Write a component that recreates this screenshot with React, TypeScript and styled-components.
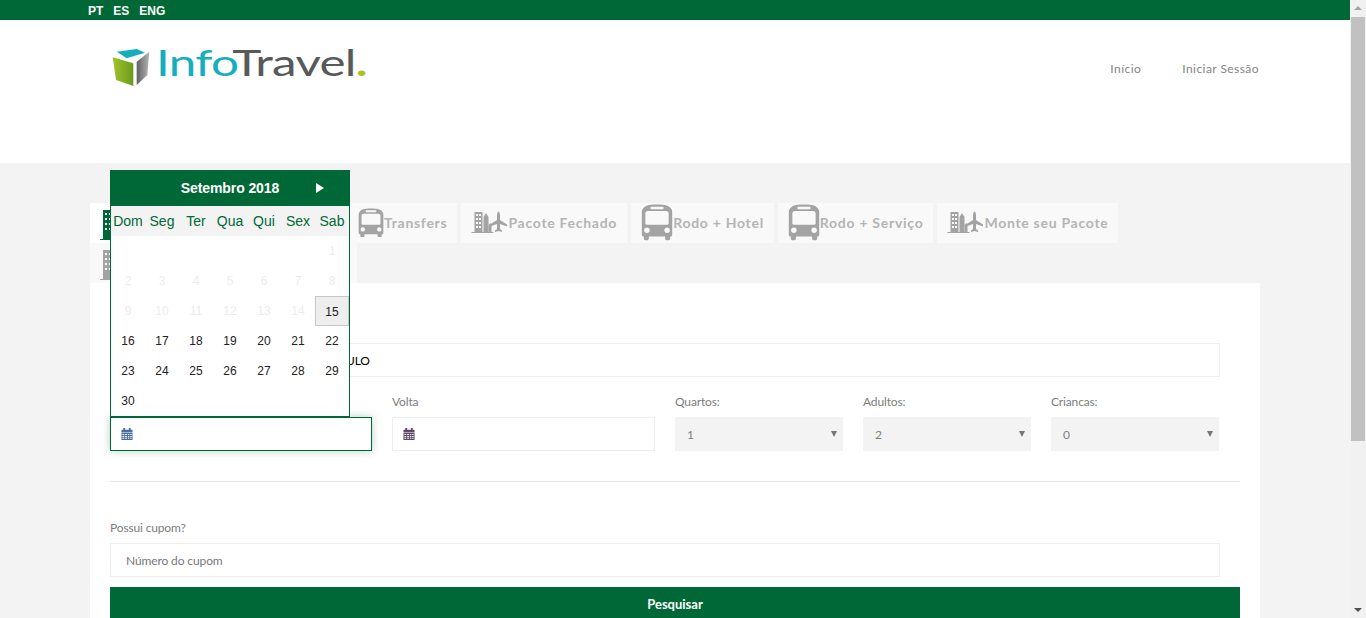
import React, { FC } from "react"
import styled, { createGlobalStyle } from "styled-components"

const GREEN = "#006837"

const GlobalStyle = createGlobalStyle`
    html, body {
        margin: 0;
        padding: 0;
        height: 618px;
        overflow: hidden;
        background: #f3f3f3;
        font-family: 'Lato', sans-serif;
    }
    * { box-sizing: border-box; }
`

const BusIcon: FC<{ size: number; className?: string }> = ({ size, className }) => (
    <svg className={className} width={size} height={size * 1.14} viewBox="0 0 31 36" fill="#a3a3a3">
        <path d="M6 1.500C9 .2 22 .2 25 1.500c3 1.200 5.500 3 5.500 6.500V30c0 1.400-.7 2-2 2v2c0 2.500-5 2.500-5 0v-2H7.500v2c0 2.500-5 2.500-5 0v-2c-1.300 0-2-.6-2-2V8c0-3.500 2.500-5.300 5.500-6.500Z" />
        <rect x="9" y="2.800" width="13" height="2.400" rx="1" fill="#f9f9f9" />
        <path d="M4 9.500C4 8 5 7 6.500 7h18C26 7 27 8 27 9.500V19c0 1-1 1.500-2 1.500H6c-1 0-2-.5-2-1.500Z" fill="#f9f9f9" />
        <circle cx="5.500" cy="26" r="2.700" fill="#f9f9f9" />
        <circle cx="25.500" cy="26" r="2.700" fill="#f9f9f9" />
    </svg>
)

const CityPlaneIcon: FC = () => (
    <svg width="37" height="23" viewBox="0 0 36 23" fill="#a3a3a3">
        <rect x="3" y="1" width="8" height="20" />
        <path d="M4.500 3h2v2h-2zM7.500 3h2v2h-2zM4.500 7h2v2h-2zM7.500 7h2v2h-2zM4.500 11h2v2h-2zM7.500 11h2v2h-2zM4.500 15h2v2h-2zM7.500 15h2v2h-2z" fill="#f9f9f9" />
        <path d="M12 21V6l2.500-4L17 6v15Z" />
        <path d="M17 21v-7l2-2 1 2v7Z" />
        <rect x="0" y="21" width="22" height="1" />
        <path d="M27 0c1 0 1.500 2 1.500 5v3.500l7 4.500v2l-7-2.500v5l2 1.500v1.500L27 19.500 23.500 20.500V19l2-1.500v-5l-7 2.500v-2l7-4.500V5c0-3 .5-5 1.500-5Z" transform="translate(0 0.500)" />
    </svg>
)

const HotelIcon: FC<{ color: string }> = ({ color }) => (
    <HotelGlyph width="30" height="30" viewBox="0 0 30 30" fill={color}>
        <rect x="3" y="0" width="18" height="29" />
        <path d="M5 3h2v2H5zM9 3h2v2H9zM13 3h2v2h-2zM17 3h2v2h-2zM5 8h2v2H5zM9 8h2v2H9zM13 8h2v2h-2zM17 8h2v2h-2zM5 13h2v2H5zM9 13h2v2H9zM13 13h2v2h-2zM17 13h2v2h-2zM5 18h2v2H5zM9 18h2v2H9zM13 18h2v2h-2zM17 18h2v2h-2z" fill="#f9f9f9" />
        <rect x="0" y="29" width="26" height="1" />
    </HotelGlyph>
)

const CalendarIcon: FC<{ color: string }> = ({ color }) => (
    <svg width="12" height="12" viewBox="0 0 12 13" fill={color}>
        <path d="M0 2h2V0h2v2h4V0h2v2h2v3H0Z" />
        <path d="M0 5.500h12V13H0Zm1 1v1.200h2V6.500Zm3 0v1.200h2V6.500Zm3 0v1.200h1.500V6.500Zm2.500 0v1.200H11V6.500ZM1 8.700v1.300h2V8.700Zm3 0v1.300h2V8.700Zm3 0v1.300h1.500V8.700Zm2.500 0v1.300H11V8.700ZM1 11v1h2v-1Zm3 0v1h2v-1Zm3 0v1h1.500v-1Zm2.500 0v1H11v-1Z" fillRule="evenodd" />
    </svg>
)

const CubeLogo: FC = () => (
    <svg width="38" height="38" viewBox="0 0 38 38">
        <defs>
            <linearGradient id="cubeGreen" x1="0" x2="1" y1="0" y2="0">
                <stop offset="0" stopColor="#a2c42c" />
                <stop offset="1" stopColor="#6b9a1c" />
            </linearGradient>
            <linearGradient id="cubeGray" x1="0" x2="1" y1="0" y2="0">
                <stop offset="0" stopColor="#5e6062" />
                <stop offset="1" stopColor="#b4b5b7" />
            </linearGradient>
        </defs>
        <path d="M4.700 2.700 24.700 0 33 3.700 14.700 9.300Z" fill="#14aebf" />
        <path d="M.7 8.300 21.300 14.300V37L4 31Z" fill="url(#cubeGreen)" />
        <path d="M24.700 12.700 37.300 2.700 35.300 26 24.700 36Z" fill="url(#cubeGray)" />
    </svg>
)

const weekDays = ["Dom", "Seg", "Ter", "Qua", "Qui", "Sex", "Sab"]

const DatePopup: FC = () => {
    const cells: (number | null)[] = [null, null, null, null, null, null]
    for (let d = 1; d <= 30; d++) cells.push(d)

    return (
        <Popup>
            <PopupHeader>
                <PopupTitle>Setembro 2018</PopupTitle>
                <NextArrow />
            </PopupHeader>
            <WeekRow>
                {weekDays.map(d => <WeekDay key={d}>{d}</WeekDay>)}
            </WeekRow>
            <DayGrid>
                {cells.map((d, c) => (
                    <Day key={c} $past={d !== null && d < 15} $today={d === 15}>{d}</Day>
                ))}
            </DayGrid>
        </Popup>
    )
}

const Choice: FC<{ label: string; value: string }> = ({ label, value }) => (
    <Field $width={168}>
        <Label>{label}</Label>
        <SelectBox>
            <Select defaultValue={value}>
                <option>{value}</option>
            </Select>
        </SelectBox>
    </Field>
)

export default function App() {
    return (
        <Page>
            <GlobalStyle />
            <Main>
                <TopBar>
                    <Lang>PT</Lang>
                    <Lang>ES</Lang>
                    <Lang>ENG</Lang>
                </TopBar>
                <Header>
                    <Logo>
                        <CubeLogo />
                        <LogoText>
                            <LogoInfo>Info</LogoInfo>Travel<LogoDot>.</LogoDot>
                        </LogoText>
                    </Logo>
                    <Menu>
                        <MenuItem>Início</MenuItem>
                        <MenuItem>Iniciar Sessão</MenuItem>
                    </Menu>
                </Header>
                <Content>
                    <Tabs>
                        <Tab $active $width={128}><HotelIcon color={GREEN} /></Tab>
                        <Tab $width={122} />
                        <Tab><BusIcon size={26} />Transfers</Tab>
                        <Tab><CityPlaneIcon />Pacote Fechado</Tab>
                        <Tab><BusIcon size={32} />Rodo + Hotel</Tab>
                        <Tab><BusIcon size={32} />Rodo + Serviço</Tab>
                        <Tab><CityPlaneIcon />Monte seu Pacote</Tab>
                        <Tab $width={267}><HotelIcon color="#a3a3a3" /></Tab>
                    </Tabs>
                    <Panel>
                        <Input $width={1110} defaultValue="HOTEIS EM SAO PAULO, SP - EM SAO PAULO" />
                        <Row>
                            <Field $width={262}>
                                <Label />
                                <DateBox>
                                    <DateIcon><CalendarIcon color="#4a6f9e" /></DateIcon>
                                    <DateInput $focused />
                                    <DatePopup />
                                </DateBox>
                            </Field>
                            <Field $width={263}>
                                <Label>Volta</Label>
                                <DateBox>
                                    <DateIcon><CalendarIcon color="#5c4a63" /></DateIcon>
                                    <DateInput />
                                </DateBox>
                            </Field>
                            <Choice label="Quartos:" value="1" />
                            <Choice label="Adultos:" value="2" />
                            <Choice label="Criancas:" value="0" />
                        </Row>
                        <Rule />
                        <Label>Possui cupom?</Label>
                        <Input $width={1110} placeholder="Número do cupom" />
                        <SearchButton>Pesquisar</SearchButton>
                    </Panel>
                </Content>
            </Main>
            <ScrollBar>
                <ScrollUp />
                <ScrollThumb />
                <ScrollDown />
            </ScrollBar>
        </Page>
    )
}

const Page = styled.div`
    display: flex;
    width: 1366px;
    height: 618px;
    overflow: hidden;
`

const Main = styled.div`
    width: 1350px;
    flex: none;
`

const TopBar = styled.div`
    display: flex;
    gap: 10px;
    height: 20px;
    padding: 2px 0 0 88px;
    align-items: center;
    background: ${GREEN};
`

const Lang = styled.a`
    font-family: 'Liberation Sans', Arial, sans-serif;
    font-size: 12px;
    font-weight: 700;
    color: #fff;
`

const Header = styled.header`
    display: flex;
    justify-content: space-between;
    height: 143px;
    padding: 29px 91px 0 112px;
    background: #fff;
`

const Logo = styled.div`
    display: flex;
    align-items: flex-start;
    gap: 6px;
    height: 40px;
`

const LogoText = styled.div`
    font-family: 'Lato', sans-serif;
    font-size: 36px;
    font-weight: 400;
    line-height: 26px;
    letter-spacing: -0.5px;
    color: #58595b;
    transform: scaleX(1.37);
    transform-origin: left top;
`

const LogoInfo = styled.span`
    color: #14aebf;
`

const LogoDot = styled.span`
    color: #a6c524;
    font-weight: 700;
`

const Menu = styled.nav`
    display: flex;
    gap: 41px;
    padding-top: 13px;
`

const MenuItem = styled.a`
    font-size: 12px;
    line-height: 14px;
    letter-spacing: 0.44px;
    color: #858585;
`

const Content = styled.main`
    width: 1170px;
    margin: 0 auto;
    padding-top: 40px;
`

const Tabs = styled.div`
    display: flex;
    flex-wrap: wrap;
    column-gap: 4px;
`

const Tab = styled.div<{ $active?: boolean; $width?: number }>`
    display: flex;
    align-items: center;
    height: 40px;
    padding: 0 10px 1px;
    ${p => p.$width ? `width: ${p.$width}px;` : ""}
    background: ${p => p.$active ? "#fff" : "#f9f9f9"};
    font-size: 14px;
    font-weight: 700;
    letter-spacing: 0.72px;
    white-space: nowrap;
    color: #b4b4b4;
`

const HotelGlyph = styled.svg`
    margin-top: 4px;
`

const Panel = styled.div`
    height: 340px;
    padding: 60px 20px 0;
    background: #fff;
`

const Label = styled.div`
    height: 24px;
    padding-top: 1px;
    font-size: 12px;
    line-height: 15px;
    letter-spacing: -0.15px;
    color: #7d7d7d;
`

const Input = styled.input<{ $width: number }>`
    display: block;
    width: ${p => p.$width}px;
    height: 34px;
    padding: 0 15px;
    border: 1px solid #eee;
    outline: none;
    background: #fff;
    font-family: 'Lato', sans-serif;
    font-size: 12px;
    letter-spacing: -0.12px;
    color: #000;
    &::placeholder {
        color: #777;
        opacity: 1;
    }
`

const Row = styled.div`
    display: flex;
    gap: 20px;
    margin-top: 16px;
`

const Field = styled.div<{ $width: number }>`
    width: ${p => p.$width}px;
    flex: none;
`

const DateBox = styled.div`
    position: relative;
    height: 34px;
`

const DateIcon = styled.span`
    position: absolute;
    z-index: 1;
    top: 11px;
    left: 11px;
    display: flex;
`

const DateInput = styled.input<{ $focused?: boolean }>`
    display: block;
    width: 100%;
    height: 34px;
    outline: none;
    background: #fff;
    border: 1px solid ${p => p.$focused ? GREEN : "#eee"};
    box-shadow: ${p => p.$focused ? "0 0 8px rgba(0, 104, 55, 0.3)" : "none"};
`

const SelectBox = styled.div`
    position: relative;
    height: 34px;
    &::after {
        content: "";
        position: absolute;
        top: 14px;
        right: 6px;
        border-left: 3.5px solid transparent;
        border-right: 3.5px solid transparent;
        border-top: 6px solid #777;
    }
`

const Select = styled.select`
    appearance: none;
    display: block;
    width: 100%;
    height: 34px;
    padding: 0 12px;
    border: none;
    border-radius: 0;
    outline: none;
    background: #f3f3f3;
    font-family: 'Lato', sans-serif;
    font-size: 12px;
    color: #808080;
`

const Rule = styled.div`
    width: 1130px;
    height: 1px;
    margin: 30px 0 37px;
    background: #e5e5e5;
`

const SearchButton = styled.button`
    display: block;
    width: 1130px;
    height: 34px;
    margin-top: 10px;
    padding-bottom: 2px;
    border: none;
    background: ${GREEN};
    font-family: 'Lato', sans-serif;
    font-size: 13px;
    font-weight: 700;
    color: #fff;
`

const Popup = styled.div`
    position: absolute;
    z-index: 2;
    left: 0;
    bottom: 100%;
    width: 240px;
    height: 247px;
    background: #fff;
    border: 1px solid ${GREEN};
    border-top: none;
    font-family: 'Liberation Sans', Arial, sans-serif;
`

const PopupHeader = styled.div`
    position: relative;
    display: flex;
    align-items: center;
    justify-content: center;
    height: 36px;
    margin: 0 -1px;
    background: ${GREEN};
`

const PopupTitle = styled.div`
    font-size: 14px;
    font-weight: 700;
    letter-spacing: -0.1px;
    color: #fff;
`

const NextArrow = styled.span`
    position: absolute;
    top: 13px;
    right: 26px;
    border-top: 5px solid transparent;
    border-bottom: 5px solid transparent;
    border-left: 8px solid #fff;
`

const WeekRow = styled.div`
    display: grid;
    grid-template-columns: repeat(7, 34px);
    height: 30px;
    align-items: center;
    background: #f3f3f3;
`

const WeekDay = styled.div`
    font-size: 14px;
    text-align: center;
    color: ${GREEN};
`

const DayGrid = styled.div`
    display: grid;
    grid-template-columns: repeat(7, 34px);
    grid-auto-rows: 30px;
`

const Day = styled.div<{ $past?: boolean; $today?: boolean }>`
    display: flex;
    align-items: center;
    justify-content: center;
    font-size: 12px;
    padding-top: ${p => p.$today ? "2px" : "0"};
    color: ${p => p.$past ? "#ececec" : "#222"};
    background: ${p => p.$today ? "#eee" : "transparent"};
    border: ${p => p.$today ? "1px solid #c8c8c8" : "none"};
`

const ScrollBar = styled.div`
    position: relative;
    width: 16px;
    flex: none;
    background: #f1f1f1;
`

const ScrollUp = styled.span`
    position: absolute;
    top: 6px;
    left: 4px;
    border-left: 4px solid transparent;
    border-right: 4px solid transparent;
    border-bottom: 4px solid #a3a3a3;
`

const ScrollThumb = styled.div`
    position: absolute;
    top: 17px;
    left: 1px;
    width: 14px;
    height: 424px;
    background: #c1c1c1;
`

const ScrollDown = styled.span`
    position: absolute;
    bottom: 6px;
    left: 4px;
    border-left: 4px solid transparent;
    border-right: 4px solid transparent;
    border-top: 4px solid #505050;
`
